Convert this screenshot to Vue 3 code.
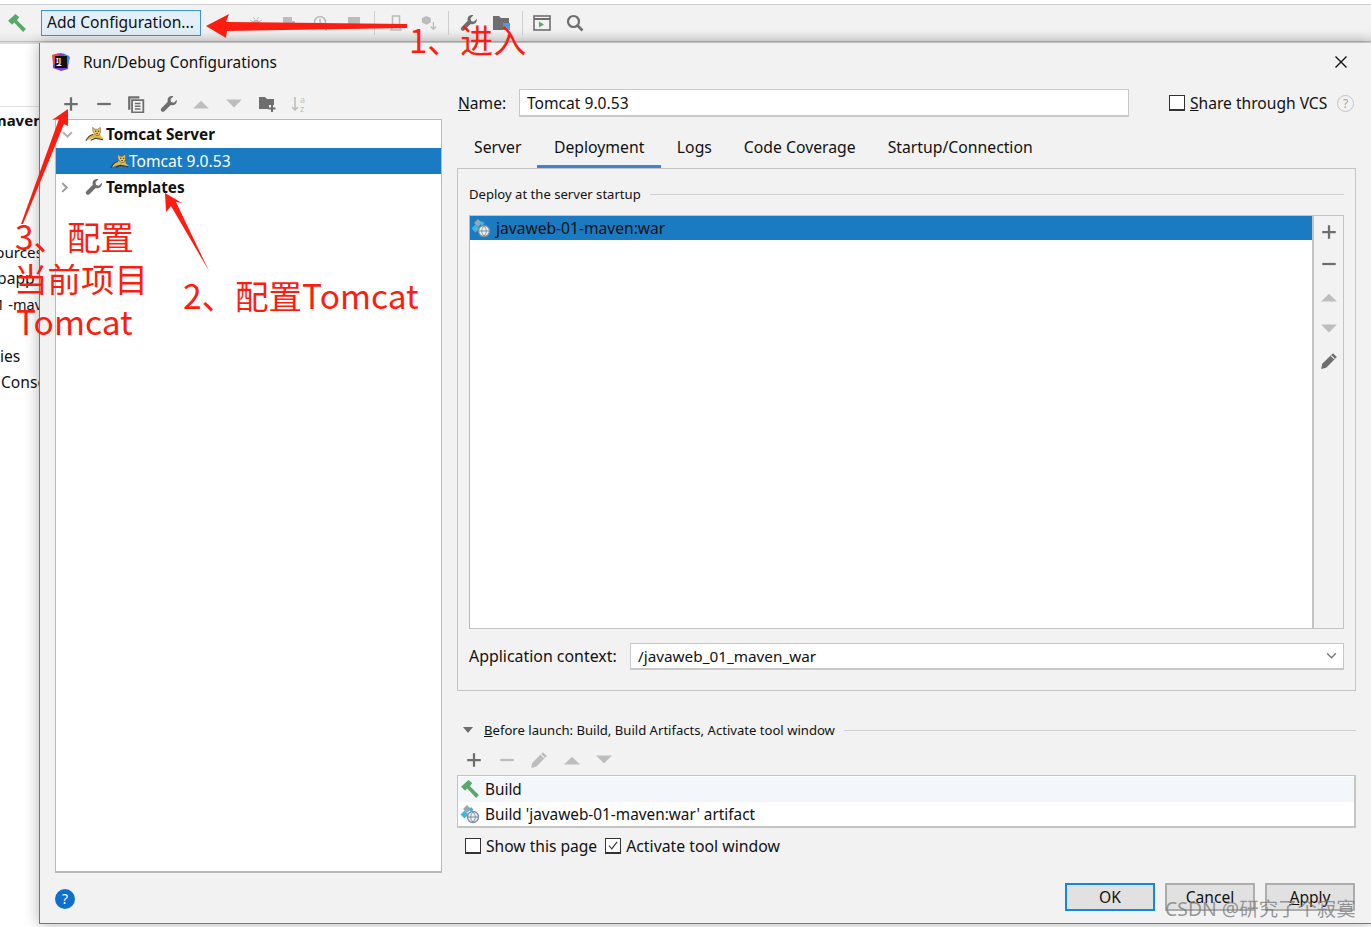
<template>
  <div class="ide">
    <svg class="sprite" width="0" height="0">
      <defs>
        <symbol id="plus" viewBox="0 0 16 16"><path d="M2 8h12M8 2v12" fill="none" stroke="currentColor" stroke-width="2"/></symbol>
        <symbol id="minus" viewBox="0 0 16 16"><path d="M2 8h12" fill="none" stroke="currentColor" stroke-width="2"/></symbol>
        <symbol id="copy" viewBox="0 0 16 16"><path d="M1 1h10v2H3v10H1z" fill="currentColor"/><path d="M4.500 4.500h10v11h-10z" fill="none" stroke="currentColor" stroke-width="1.600"/><path d="M7 7.500h5M7 10h5M7 12.500h5" stroke="currentColor" stroke-width="1.300"/></symbol>
        <symbol id="wrench" viewBox="0 0 16 16"><path d="M15 4.200 12.300 6.800 9.900 6.200 9.300 3.800 12 1.200C9.900.4 7.600 1.300 6.900 3.400 6.600 4.300 6.600 5.300 6.900 6.100L1.300 11.700C.5 12.500.5 13.600 1.300 14.400 2 15.100 3.200 15.100 3.900 14.400L9.500 8.800C11.600 9.600 13.900 8.600 14.700 6.600 15 5.800 15 5 15 4.200Z" fill="currentColor"/></symbol>
        <symbol id="up" viewBox="0 0 16 16"><path d="M1 12 8 5l7 7z" fill="currentColor"/></symbol>
        <symbol id="down" viewBox="0 0 16 16"><path d="M1 4h14l-7 7z" fill="currentColor"/></symbol>
        <symbol id="folderplus" viewBox="0 0 18 18"><path d="M1 2h6l2 2h7v6h-5v4H1z" fill="currentColor"/><path d="M14 10v7M10.500 13.500h7" stroke="currentColor" stroke-width="2"/></symbol>
        <symbol id="pencil" viewBox="0 0 16 16"><path d="M11.500 1 15 4.500 5.500 14 1 15l1-4.500z" fill="currentColor"/><path d="M9.800 3.200l3 3" stroke="#f2f2f2" stroke-width="1"/></symbol>
        <symbol id="hammer" viewBox="0 0 18 18"><path d="M1 7 7.500 1 11 3.500 9 6.500 17 14.500 14.500 17 6.500 8.500 4.500 10.500z" fill="#59a869"/></symbol>
        <symbol id="tomcat" viewBox="0 0 20 16"><path d="M2 14C4 10 6 8.500 9 8l2-1 5 1 1 3 3 2-4 .5-5-1.500-5 1-2 1z" fill="#e3b64a"/><path d="M8 1l2.500 2h3L16 1l.5 5-2 3.500h-3L8.500 6z" fill="#efc660" stroke="#6b5a24" stroke-width=".6"/><path d="M1 15C3 11 5 9 8.500 8.500M6 14.500l5-2 8 1.500M10.500 5h1.500M13.500 5H15M12 7.500h1.500" fill="none" stroke="#333126" stroke-width="1.100"/></symbol>
        <symbol id="artifact" viewBox="0 0 20 20"><path d="M7 1l4 4-4 4-4-4z" fill="#9aa7b0"/><path d="M4.500 6.500l4 4-4 4-4-4z" fill="#40b6e0"/><path d="M11 3l2.500 2.500L11 8 8.500 5.500z" fill="#40b6e0"/><circle cx="13" cy="13" r="5.500" fill="#eef2f5" stroke="#7d8f9c" stroke-width="1.400"/><path d="M8 13h10M13 8c-3 3-3 7 0 10M13 8c3 3 3 7 0 10" fill="none" stroke="#7d8f9c"/></symbol>
      </defs>
    </svg>

    <header class="ide-toolbar">
      <svg class="tb-hammer"><use href="#hammer"/></svg>
      <div class="add-config">Add Configuration...</div>
      <div class="tb-group tb-disabled">
        <svg class="ic" viewBox="0 0 16 16"><ellipse cx="8" cy="9.500" rx="4" ry="5" fill="currentColor"/><path d="M2 5l3 2M14 5l-3 2M1 10h3M15 10h-3M2 15l3-2M14 15l-3-2M5 2l2 2M11 2 9 4" stroke="currentColor"/></svg>
        <svg class="ic" viewBox="0 0 16 16"><path d="M2 2h9v4h3v8H5v-3H2z" fill="currentColor"/></svg>
        <svg class="ic" viewBox="0 0 16 16"><circle cx="7" cy="7" r="5.500" fill="none" stroke="currentColor" stroke-width="1.500"/><path d="M7 3.500V7l2 2M11 12h4l-2 3z" fill="none" stroke="currentColor" stroke-width="1.500"/></svg>
        <svg class="ic" viewBox="0 0 16 16"><rect x="2" y="2" width="12" height="12" fill="currentColor"/></svg>
      </div>
      <i class="tb-sep tb-sep-a"></i>
      <div class="tb-group tb-disabled tb-b">
        <svg class="ic" viewBox="0 0 16 16"><path d="M4.500 1h7v10h-7zM3 15l2-4h6l2 4z" fill="none" stroke="currentColor" stroke-width="1.500"/></svg>
        <svg class="ic" viewBox="0 0 18 18"><path d="M6 1l5 2.500v5L6 11 1 8.500v-5z" fill="currentColor"/><path d="M14 8v8M11 13l3 3 3-3" fill="none" stroke="currentColor" stroke-width="1.500"/></svg>
      </div>
      <i class="tb-sep tb-sep-b"></i>
      <svg class="ic tb-dark tb-wrench"><use href="#wrench"/></svg>
      <svg class="ic tb-dark tb-folder" viewBox="0 0 18 18"><path d="M1 2h6l2 2h8v12H1z" fill="#6e6e6e"/><rect x="11" y="9" width="7" height="7" fill="#40a0e0"/></svg>
      <i class="tb-sep tb-sep-c"></i>
      <svg class="ic tb-window" viewBox="0 0 18 18"><rect x="1" y="2" width="16" height="14" fill="none" stroke="#6e6e6e" stroke-width="1.600"/><path d="M1 5h16" stroke="#6e6e6e" stroke-width="2"/><path d="M6 7.500l5 3-5 3z" fill="#59a869"/></svg>
      <svg class="ic tb-search" viewBox="0 0 18 18"><circle cx="7.500" cy="7.500" r="5.500" fill="none" stroke="#6e6e6e" stroke-width="2.200"/><path d="M11.500 11.500l5 5" stroke="#6e6e6e" stroke-width="2.600"/></svg>
    </header>
    <div class="ide-subbar"></div>

    <aside class="ide-tree">
      <div v-for="(row, i) in sideRows" :key="i" class="ide-row" :class="row.cls">{{ row.text }}</div>
    </aside>

    <section class="dialog">
      <div class="dlg-title">
        <svg class="ij" viewBox="0 0 20 20">
          <path d="M2 3l8-2 8 3-1 13-7 2-8-3z" fill="#7b3fd6"/><path d="M1 3l7-2-2 9-4 2z" fill="#f0443f"/><path d="M12 1l7 4-2 8z" fill="#2a8cf0"/>
          <rect x="4" y="4" width="12" height="12" fill="#111"/>
          <text x="5" y="11" class="ij-text">IJ</text><path d="M5.500 13.500h5" stroke="#fff"/>
        </svg>
        <span class="dlg-name">Run/Debug Configurations</span>
        <svg class="dlg-close" viewBox="0 0 14 14"><path d="M1.500 1.500l11 11M12.500 1.500l-11 11" stroke="#111" stroke-width="1.400"/></svg>
      </div>

      <div class="dlg-body">
        <div class="left-col">
          <div class="tree-tools">
            <svg class="ic dark"><use href="#plus"/></svg>
            <svg class="ic dark"><use href="#minus"/></svg>
            <svg class="ic dark"><use href="#copy"/></svg>
            <svg class="ic dark"><use href="#wrench"/></svg>
            <svg class="ic light"><use href="#up"/></svg>
            <svg class="ic light"><use href="#down"/></svg>
            <svg class="ic dark"><use href="#folderplus"/></svg>
            <svg class="ic light" viewBox="0 0 18 18"><path d="M5 2v13M2 12l3 3 3-3" fill="none" stroke="currentColor" stroke-width="1.500"/><text x="10" y="8" class="az">a</text><text x="10" y="17" class="az">z</text></svg>
          </div>
          <div class="tree">
            <div class="tree-row">
              <svg class="chev" viewBox="0 0 10 10"><path d="M1 3l4 4 4-4" fill="none" stroke="#b0b0b0" stroke-width="1.800"/></svg>
              <svg class="cat"><use href="#tomcat"/></svg>
              <b>Tomcat Server</b>
            </div>
            <div class="tree-row selected">
              <svg class="cat child"><use href="#tomcat"/></svg>
              <span>Tomcat 9.0.53</span>
            </div>
            <div class="tree-row">
              <svg class="chev chev-right" viewBox="0 0 10 10"><path d="M3 1l4 4-4 4" fill="none" stroke="#9a9a9a" stroke-width="1.800"/></svg>
              <svg class="cat tree-wrench"><use href="#wrench"/></svg>
              <b>Templates</b>
            </div>
          </div>
        </div>

        <div class="right-col">
          <div class="name-row">
            <label class="name-label"><u>N</u>ame:</label>
            <div class="field name-field">Tomcat 9.0.53</div>
            <span class="box share-box"></span>
            <span class="share"><u>S</u>hare through VCS</span>
            <span class="help-q">?</span>
          </div>

          <nav class="tabs">
            <span v-for="tab in tabs" :key="tab" class="tab" :class="{ active: tab === 'Deployment' }">{{ tab }}</span>
          </nav>

          <div class="tab-panel">
            <div class="titled"><span>Deploy at the server startup</span><i></i></div>
            <div class="deploy-list">
              <div class="deploy-items">
                <div class="deploy-row"><svg class="art"><use href="#artifact"/></svg>javaweb-01-maven:war</div>
              </div>
              <div class="side-tools">
                <svg class="ic dark"><use href="#plus"/></svg>
                <svg class="ic dark"><use href="#minus"/></svg>
                <svg class="ic light"><use href="#up"/></svg>
                <svg class="ic light"><use href="#down"/></svg>
                <svg class="ic dark"><use href="#pencil"/></svg>
              </div>
            </div>
            <div class="context-row">
              <span>Application context:</span>
              <div class="field context-field">
                /javaweb_01_maven_war
                <svg class="combo" viewBox="0 0 10 10"><path d="M1 3l4 4 4-4" fill="none" stroke="#777" stroke-width="1.200"/></svg>
              </div>
            </div>
          </div>

          <div class="titled before">
            <svg class="tri" viewBox="0 0 12 12"><path d="M1 3h10L6 9z" fill="#6e6e6e"/></svg>
            <span><u>B</u>efore launch: Build, Build Artifacts, Activate tool window</span><i></i>
          </div>
          <div class="before-tools">
            <svg class="ic dark"><use href="#plus"/></svg>
            <svg class="ic light"><use href="#minus"/></svg>
            <svg class="ic light"><use href="#pencil"/></svg>
            <svg class="ic light"><use href="#up"/></svg>
            <svg class="ic light"><use href="#down"/></svg>
          </div>
          <div class="before-list">
            <div class="before-row first"><svg class="art"><use href="#hammer"/></svg>Build</div>
            <div class="before-row"><svg class="art"><use href="#artifact"/></svg>Build 'javaweb-01-maven:war' artifact</div>
          </div>
          <div class="checks">
            <span class="box"></span><span>Show this page</span>
            <span class="box checked"><svg viewBox="0 0 16 16"><path d="M3 8l3.500 4L13 3.500" fill="none" stroke="#333" stroke-width="1.400"/></svg></span><span class="activate">Activate tool window</span>
          </div>
        </div>
      </div>

      <footer class="dlg-foot">
        <span class="help-btn">?</span>
        <div class="buttons">
          <button class="btn primary">OK</button>
          <button class="btn">Cancel</button>
          <button class="btn"><u>A</u>pply</button>
        </div>
      </footer>
    </section>

    <!-- red hand drawn notes on top of the screenshot -->
    <svg class="notes" viewBox="0 0 1371 927">
      <path d="M206 26 229 14 226 22 407 24 407 28 227 31 226 38z"/>
      <path d="M68 109 52 120 59 119 21 224 23 224 64 124 68 126z"/>
      <path d="M165 193 182 203 176 202 209 271 171 206 166 212z"/>
    </svg>
    <div class="note n1">1、进入</div>
    <div class="note n3a">3、</div>
    <div class="note n3b">配置</div>
    <div class="note n3c">当前项目</div>
    <div class="note n3d">Tomcat</div>
    <div class="note n2">2、配置Tomcat</div>
    <div class="watermark">CSDN @研究了个寂寞</div>
  </div>
</template>

<script setup>
const tabs = ['Server', 'Deployment', 'Logs', 'Code Coverage', 'Startup/Connection']

const sideRows = [
  { text: 'maven', cls: 'bold' },
  { text: '' }, { text: '' }, { text: '' }, { text: '' },
  { text: 'sources', cls: 'cut' },
  { text: 'webapp', cls: 'cut2' },
  { text: '01 -maven', cls: 'cut3' },
  { text: '' },
  { text: 'ies' },
  { text: 'Console', cls: 'pad' }
]
</script>

<style>
html, body { background: #fff; }
</style>

<style scoped>
.ide {
  position: relative;
  width: 1371px;
  height: 927px;
  overflow: hidden;
  background: #fff;
  color: #111;
  font-family: "Noto Sans", sans-serif;
  font-size: 15.600px;
}
.sprite { position: absolute; }
.ic { width: 16px; height: 16px; flex: none; }
.ide-toolbar {
  position: relative;
  height: 36px;
  margin-top: 4px;
  border-top: 1px solid #cfcfcf;
  border-bottom: 1px solid #bdbdbd;
  background: linear-gradient(#f2f2f2 75%, #e6e6e6);
  display: flex;
  align-items: center;
  padding-left: 7px;
}
.tb-hammer { width: 20px; height: 20px; }
.add-config {
  margin-left: 14px;
  width: 160px;
  height: 26px;
  line-height: 22px;
  padding-left: 5px;
  box-sizing: border-box;
  border: 1px solid #3d93d8;
  background: #e3f0fa;
  white-space: nowrap;
}
.tb-group { display: flex; align-items: center; }
.tb-disabled { color: #bcbcbc; gap: 16.500px; margin-left: 47px; }
.tb-b { margin-left: 13px; gap: 17px; }
.tb-sep { width: 1px; height: 24px; background: #cfcfcf; flex: none; }
.tb-sep-a { margin-left: 12.500px; }
.tb-sep-b { margin-left: 11px; }
.tb-sep-c { margin-left: 12px; }
.tb-dark { color: #6e6e6e; }
.tb-wrench { margin-left: 11px; width: 18px; height: 18px; }
.tb-folder { margin-left: 14px; width: 18px; height: 18px; }
.tb-window { margin-left: 10px; width: 18px; height: 18px; }
.tb-search { margin-left: 15px; width: 18px; height: 18px; }
.ide-subbar { height: 2px; background: #dcdcdc; }

.ide-tree {
  width: 39px;
  overflow: hidden;
  margin-top: 62px;
  border-top: 1px solid #e2e2e2;
  box-sizing: border-box;
  padding-top: 2px;
}
.ide-row { height: 26px; line-height: 26px; white-space: nowrap; }
.ide-row.bold { font-weight: 700; margin-left: -8px; margin-top: -2px; font-size: 15px; }
.ide-row.cut { margin-left: -12px; margin-top: 2px; font-size: 15.200px; }
.ide-row.cut2 { margin-left: -24px; }
.ide-row.cut3 { margin-left: -12px; font-size: 14.500px; }
.ide-row.pad { margin-left: 1px; }

.dialog {
  position: absolute;
  left: 39px;
  top: 43px;
  right: 0;
  height: 881px;
  box-sizing: border-box;
  background: #f2f2f2;
  border-left: 1px solid #777;
  border-bottom: 1px solid #777;
  box-shadow: 0 0 14px rgba(0, 0, 0, 0.3);
  display: flex;
  flex-direction: column;
}
.dlg-title {
  height: 38px;
  display: flex;
  align-items: center;
  padding-left: 11px;
  flex: none;
}
.ij { width: 20px; height: 20px; }
.ij-text { font-size: 7px; font-weight: 700; fill: #fff; font-family: "Noto Sans", sans-serif; }
.dlg-name { margin-left: 12px; font-size: 15.400px; }
.dlg-close { width: 14px; height: 14px; margin-left: auto; margin-right: 23px; }

.dlg-body { flex: 1; display: flex; padding: 10px 15px 0 15px; gap: 15px; min-height: 0; }
.left-col { width: 387px; display: flex; flex-direction: column; flex: none; }
.tree-tools {
  height: 28px;
  display: flex;
  align-items: center;
  padding-left: 7px;
  padding-bottom: 2px;
  gap: 14.600px;
  flex: none;
  box-sizing: border-box;
}
.tree-tools .ic, .side-tools .ic, .before-tools .ic { width: 18px; height: 18px; }
.dark { color: #6e6e6e; }
.light { color: #bdbdbd; }
.az { font-size: 9px; fill: #bdbdbd; font-family: "Noto Sans", sans-serif; }
.tree {
  height: 754px;
  box-sizing: border-box;
  background: #fff;
  border: 1px solid #b9b9b9;
  border-bottom-width: 2px;
  padding-top: 1px;
  flex: none;
}
.tree-row {
  height: 26.500px;
  display: flex;
  align-items: center;
  padding-left: 6px;
  white-space: nowrap;
}
.tree-row b { font-size: 15.300px; }
.tree-row.selected { background: #1a7bc3; color: #fff; padding-left: 54px; }
.chev { width: 11px; height: 11px; flex: none; }
.chev-right { margin-left: -3px; margin-right: 3px; }
.cat { width: 19px; height: 16px; margin-left: 12px; margin-right: 2px; flex: none; }
.cat.child { margin-left: 0; margin-right: 0; }
.cat.tree-wrench { width: 18px; height: 18px; margin-right: 3px; color: #6e6e6e; }

.right-col { flex: 1; min-width: 0; }
.name-row { display: flex; align-items: center; height: 28px; margin-top: -2px; padding-left: 1px; }
.name-label { width: 61px; flex: none; }
.field {
  background: #fff;
  border: 1px solid #c8c8c8;
  border-bottom-width: 2px;
  box-sizing: border-box;
  padding-left: 7px;
  display: flex;
  align-items: center;
}
.name-field { width: 610px; height: 28px; }
.box {
  width: 16px;
  height: 16px;
  box-sizing: border-box;
  border: 1px solid #333;
  border-bottom-width: 2px;
  background: #fff;
  flex: none;
  display: inline-flex;
}
.share-box { margin-left: 40px; }
.share { margin-left: 5px; white-space: nowrap; width: 137px; flex: none; }
.help-q {
  width: 17px;
  height: 17px;
  margin-left: 10px;
  box-sizing: border-box;
  border: 1px solid #b9c6cf;
  border-radius: 50%;
  color: #9aa7b0;
  font-size: 12px;
  line-height: 15px;
  text-align: center;
  flex: none;
}
.tabs { display: flex; height: 39px; margin-top: 12px; padding-left: 1px; box-sizing: border-box; font-size: 15.750px; }
.tab {
  padding: 7px 16px 0;
  box-sizing: border-box;
  height: 39px;
  white-space: nowrap;
}
.tab.active { border-bottom: 3px solid #4083c9; padding: 7px 16.500px 0; }
.tab-panel {
  height: 523px;
  box-sizing: border-box;
  border: 1px solid #c4c4c4;
  padding: 15px 11px 0 11px;
}
.titled { display: flex; align-items: center; font-size: 13.100px; height: 20px; }
.titled span { white-space: nowrap; }
.titled i { flex: 1; height: 1px; background: #d0d0d0; margin-left: 9px; }
.deploy-list {
  display: flex;
  height: 414px;
  box-sizing: border-box;
  margin-top: 11px;
  border: 1px solid #c4c4c4;
  border-left-color: #b9b9b9;
}
.deploy-items {
  flex: 1;
  background: #fff;
  border-right: 2px solid #c4c4c4;
}
.deploy-row {
  height: 24px;
  background: #1a7bc3;
  color: #111;
  display: flex;
  align-items: center;
}
.art { width: 20px; height: 20px; margin-right: 5px; margin-left: 1px; flex: none; }
.side-tools {
  width: 29px;
  display: flex;
  flex-direction: column;
  align-items: center;
  gap: 14.300px;
  padding-top: 7px;
  box-sizing: border-box;
  flex: none;
}
.context-row { display: flex; align-items: center; height: 28px; margin-top: 13px; gap: 13px; }
.context-row span { white-space: nowrap; width: 148px; flex: none; font-size: 15.900px; }
.context-field { flex: 1; height: 27px; font-size: 15.300px; }
.combo { width: 11px; height: 11px; margin-left: auto; margin-right: 6px; }
.before { margin-top: 29px; padding-left: 5px; }
.tri { width: 12px; height: 12px; margin-right: 10px; flex: none; }
.before-tools { height: 28px; display: flex; align-items: center; gap: 14.600px; padding-left: 8px; margin-top: 6px; }
.before-list {
  height: 53px;
  box-sizing: border-box;
  border: 2px solid #c4c4c4;
  border-top-width: 1px;
  border-left-width: 1px;
  background: #fff;
  margin-top: 1px;
  font-size: 15.350px;
}
.before-row { height: 24.500px; display: flex; align-items: center; padding-left: 1px; white-space: nowrap; }
.before-row.first { background: #f3f6fb; margin-top: 1px; }
.checks { display: flex; align-items: center; gap: 5px; margin-top: 8px; padding-left: 8px; height: 20px; white-space: nowrap; }
.checks .checked { margin-left: 3px; }
.checks .checked svg { width: 100%; height: 100%; }
.activate { font-size: 15.800px; }
.dlg-foot {
  height: 58px;
  flex: none;
  display: flex;
  align-items: center;
  padding: 0 16px 0 15px;
  justify-content: space-between;
}
.help-btn {
  width: 20px;
  height: 20px;
  margin-top: 9px;
  border-radius: 50%;
  background: #0f6fd0;
  color: #fff;
  font-size: 14px;
  line-height: 20px;
  text-align: center;
}
.buttons { display: flex; gap: 10px; margin-top: 6px; }
.btn {
  width: 90px;
  height: 28px;
  box-sizing: border-box;
  border: 2px solid #adadad;
  background: #e1e1e1;
  color: #111;
  font-family: "Noto Sans", sans-serif;
  font-size: 15.600px;
  padding: 0;
}
.btn.primary { border-color: #1487e6; }

.notes { position: absolute; inset: 0; width: 1371px; height: 927px; pointer-events: none; }
.notes path { fill: #fd1d10; }
.note {
  position: absolute;
  color: #fd1d10;
  font-family: "Noto Sans CJK SC", "Noto Sans", sans-serif;
  font-size: 33.500px;
  line-height: 40px;
  white-space: nowrap;
}
.n1 { left: 409px; top: 19px; font-size: 33px; }
.n3a { left: 15px; top: 216px; }
.n3b { left: 67px; top: 216px; }
.n3c { left: 14px; top: 258px; }
.n3d { left: 16px; top: 301px; }
.n2 { left: 183px; top: 275px; }
.watermark {
  position: absolute;
  left: 1165px;
  top: 896px;
  color: rgba(120, 120, 120, 0.75);
  font-family: "Noto Sans", "Noto Sans CJK SC", sans-serif;
  font-size: 19.400px;
  line-height: 26px;
  white-space: nowrap;
}
</style>
